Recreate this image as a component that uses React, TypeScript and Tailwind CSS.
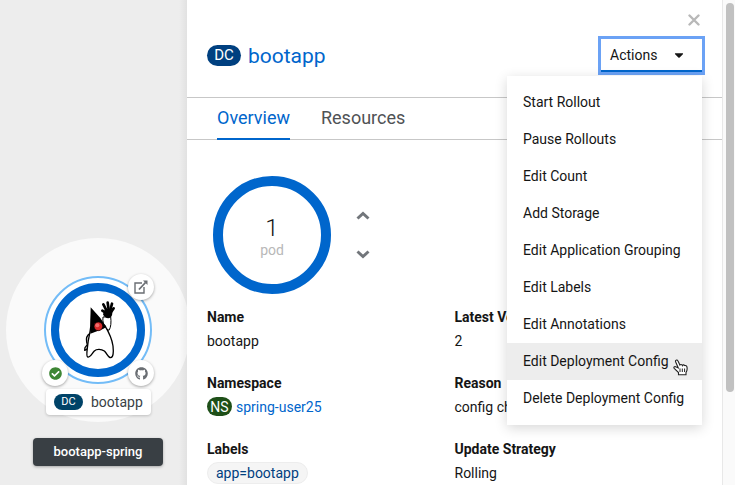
import type { ReactNode } from 'react';
import { FaCheckCircle, FaGithub, FaCaretDown } from 'react-icons/fa';

const actions = [
  'Start Rollout',
  'Pause Rollouts',
  'Edit Count',
  'Add Storage',
  'Edit Application Grouping',
  'Edit Labels',
  'Edit Annotations',
  'Edit Deployment Config',
  'Delete Deployment Config',
];

function Duke() {
  return (
    <svg viewBox="117 90 111 180" className="h-[60px] w-[37px]" role="img" aria-label="Java application">
      <path d="M147 190 C139 195 135 206 137 216 L139 224 L132 233 L131 241 L138 238 L145 218" fill="#fff" stroke="#000" strokeWidth="4" strokeLinejoin="round" />
      <path d="M186 141 C184 155 188 163 193 174 L204 181 C210 172 211 156 209 140 Z" fill="#fff" stroke="#000" strokeWidth="3" />
      <path d="M149 172 L191 166 C204 187 213 206 216 228 C218 247 217 263 209 263 C201 263 198 250 190 243 C181 237 167 236 160 243 C153 250 147 263 140 261 C135 259 138 244 140 226 C142 204 147 192 149 172 Z" fill="#fff" stroke="#000" strokeWidth="4" strokeLinejoin="round" />
      <path d="M149 112 L178 144 L196 171 L186 177 L148 191 C146 166 149 138 149 112 Z" fill="#000" />
      <g stroke="#000" strokeWidth="8" strokeLinecap="round">
        <path d="M197 130L184 122" />
        <path d="M198 124L187 103" />
        <path d="M203 120L200 98" />
        <path d="M208 120L213 101" />
        <path d="M209 128L218 115" />
      </g>
      <path d="M191 119 C197 115 208 116 213 124 C216 134 211 144 202 145 C195 145 188 139 186 133 Z" fill="#000" />
      <circle cx="172" cy="169" r="13" fill="#d92b2b" stroke="#000" strokeWidth="2" />
      <circle cx="169" cy="166" r="6" fill="#f26d6d" />
    </svg>
  );
}

function Badge({ className, children }: { className: string; children: ReactNode }) {
  return <span className={`inline-flex shrink-0 items-center justify-center rounded-full text-white ${className}`}>{children}</span>;
}

function Topology() {
  const decorator = 'absolute flex size-[26px] items-center justify-center rounded-full bg-white shadow-[0_1px_3px_rgba(0,0,0,0.35)]';
  return (
    <section aria-label="Topology" className="relative w-[187px] shrink-0 overflow-hidden bg-[#ededed]">
      <div className="absolute top-[238px] left-[6px] size-[184px] rounded-full bg-[#fafafa]" />
      <div className="absolute top-[276px] left-[44px] flex size-[108px] items-center justify-center rounded-full border-2 border-[#73bcf7] bg-white">
        <div className="flex size-[94px] items-center justify-center rounded-full border-8 border-[#0066cc]">
          <Duke />
        </div>
      </div>
      <a href="#open" aria-label="Open URL" className={`${decorator} top-[274px] left-[128px] text-[#6a6e73]`}>
        <svg viewBox="0 0 14 14" className="size-[14px]" fill="none" stroke="currentColor" strokeWidth="1.4">
          <path d="M8 3H1v10h9V7" />
          <path d="M5 9.500L11.500 2.500" strokeWidth="1.800" />
          <path d="M9 0.500h4.500V5Z" fill="currentColor" stroke="none" />
        </svg>
      </a>
      <span className={`${decorator} top-[360px] left-[42px] text-[#3e8635]`}>
        <FaCheckCircle size={13} />
      </span>
      <a href="#source" aria-label="Source code" className={`${decorator} top-[360px] left-[128px] text-[#6a6e73]`}>
        <FaGithub size={13} />
      </a>
      <div className="absolute top-[389px] left-[46px] flex h-[26px] items-center gap-2 rounded bg-white px-2 text-sm text-[#393f44] shadow-[0_1px_3px_rgba(0,0,0,0.2)]">
        <Badge className="h-4 w-[29px] bg-[#004368] text-[11px]">DC</Badge>
        bootapp
      </div>
      <div className="absolute top-[438px] left-[33px] flex h-7 w-[130px] items-center justify-center rounded bg-[#393f44] text-[13px] font-medium text-white shadow-[0_1px_3px_rgba(0,0,0,0.3)]">
        bootapp-spring
      </div>
      <div className="absolute inset-y-0 right-0 w-2 bg-linear-to-r from-transparent to-black/5" />
    </section>
  );
}

function Cursor() {
  return (
    <svg viewBox="0 0 15 17" className="pointer-events-none absolute top-4 left-[166px] h-[17px] w-[15px]" aria-hidden="true">
      <path d="M3.500 1C2.500 1.200 2.300 2.200 2.700 3L5.300 9L2.700 7.800C1.500 7.300 0.300 8.200 1.200 9.400L5.500 13.500V15.800H13V13.500C14.200 11.500 14.300 9 13.800 7.500C13.400 6.300 12 6.300 11.800 7C11.500 5.700 9.800 5.500 9.400 6.500C8.900 5.300 7.400 5.200 6.900 6.100L5 2C4.700 1.200 4.200 0.900 3.500 1Z" fill="#fff" stroke="#222" strokeWidth="1.100" />
      <path d="M7 9.500V13M9.300 9.500V13M11.600 9.500V13" stroke="#222" strokeWidth="1" />
    </svg>
  );
}

function Actions() {
  return (
    <div className="relative">
      <button type="button" aria-expanded="true" aria-haspopup="menu" className="flex h-[33px] w-[101px] items-center justify-between border-b-2 border-[#0066cc] bg-white pr-4 pl-[9px] text-sm ring-1 ring-[#cfe0fb] outline-3 outline-[#6ba2f5]">
        Actions
        <FaCaretDown size={14} />
      </button>
      <ul role="menu" className="absolute top-[37px] right-0 z-10 w-[195px] bg-white py-2 shadow-[0_3px_12px_rgba(3,3,3,0.16)]">
        {actions.map((label) => {
          const hovered = label === 'Edit Deployment Config';
          return (
            <li key={label} role="none" className="relative">
              <button type="button" role="menuitem" className={`block h-[37px] w-full px-4 pb-[2px] text-left text-sm whitespace-nowrap ${hovered ? 'bg-[#ededed]' : ''}`}>
                {label}
              </button>
              {hovered && <Cursor />}
            </li>
          );
        })}
      </ul>
    </div>
  );
}

function Chevron({ down }: { down?: boolean }) {
  return (
    <svg viewBox="0 0 14 14" className="size-[14px]" fill="none" stroke="currentColor" strokeWidth="3">
      <path d={down ? 'M1.500 4.500L7 9.500L12.500 4.500' : 'M1.500 9.500L7 4.500L12.500 9.500'} />
    </svg>
  );
}

function Detail({ term, children }: { term: string; children: ReactNode }) {
  return (
    <div>
      <dt className="leading-[23px] font-bold">{term}</dt>
      <dd className="flex h-[23px] items-center">{children}</dd>
    </div>
  );
}

export default function App() {
  return (
    <main className="flex h-screen overflow-hidden bg-white font-[Roboto,sans-serif] text-sm text-[#151515]">
      <Topology />
      <div className="min-w-0 flex-1 overflow-hidden">
        <header className="h-[98px] border-b border-[#c7c7c7] px-5">
          <div className="flex h-[39px] items-center justify-end pr-[2px]">
            <button type="button" aria-label="Close" className="text-[#b8b8b8]">
              <svg viewBox="0 0 12 12" className="size-3" stroke="currentColor" strokeWidth="2.400" strokeLinecap="round">
                <path d="M1.500 1.500L10.500 10.500M10.500 1.500L1.500 10.500" />
              </svg>
            </button>
          </div>
          <div className="flex h-[33px] items-center justify-between">
            <h1 className="flex items-center gap-[7px] text-[21px] text-[#0066cc]">
              <Badge className="h-[21px] w-[34px] bg-[#004080] text-[15px]">DC</Badge>
              <a href="#bootapp">bootapp</a>
            </h1>
            <Actions />
          </div>
        </header>
        <nav className="flex h-[42px] gap-[31px] border-b border-[#c7c7c7] px-[30px] text-[18px] text-[#4f5255]">
          <a href="#overview" aria-current="page" className="flex h-[42px] items-center border-b-2 border-[#0066cc] text-[#0066cc]">Overview</a>
          <a href="#resources" className="flex h-[42px] items-center border-b-2 border-transparent">Resources</a>
        </nav>
        <div className="px-5 pt-9">
          <div className="flex items-center gap-[25px] pl-[6px]">
            <div className="flex size-[118px] flex-col items-center justify-center rounded-full border-10 border-[#0066cc] pt-1">
              <span className="text-[24px] leading-[26px] font-light">1</span>
              <span className="leading-[18px] text-[#b8b8b8]">pod</span>
            </div>
            <div className="flex flex-col gap-6 text-[#72767b]">
              <button type="button" aria-label="Increase pod count"><Chevron /></button>
              <button type="button" aria-label="Decrease pod count"><Chevron down /></button>
            </div>
          </div>
          <dl className="mt-3 grid grid-cols-2 gap-y-5">
            <Detail term="Name">bootapp</Detail>
            <Detail term="Latest Version">2</Detail>
            <Detail term="Namespace">
              <Badge className="mr-1 h-[19px] w-[25px] bg-[#1e4f18]">NS</Badge>
              <a href="#namespace" className="text-[#0066cc]">spring-user25</a>
            </Detail>
            <Detail term="Reason">config change</Detail>
            <Detail term="Labels">
              <a href="#label" className="rounded-full border border-[#ededed] bg-[#f5f5f5] px-2 text-[#004080]">app=bootapp</a>
            </Detail>
            <Detail term="Update Strategy">Rolling</Detail>
          </dl>
        </div>
      </div>
      <div className="w-[13px] shrink-0 border-l border-[#e8e8e8] bg-[#fafafa] pt-[3px] pl-[3px]">
        <div className="h-[389px] w-2 rounded-full bg-[#c1c1c1]" />
      </div>
    </main>
  );
}
